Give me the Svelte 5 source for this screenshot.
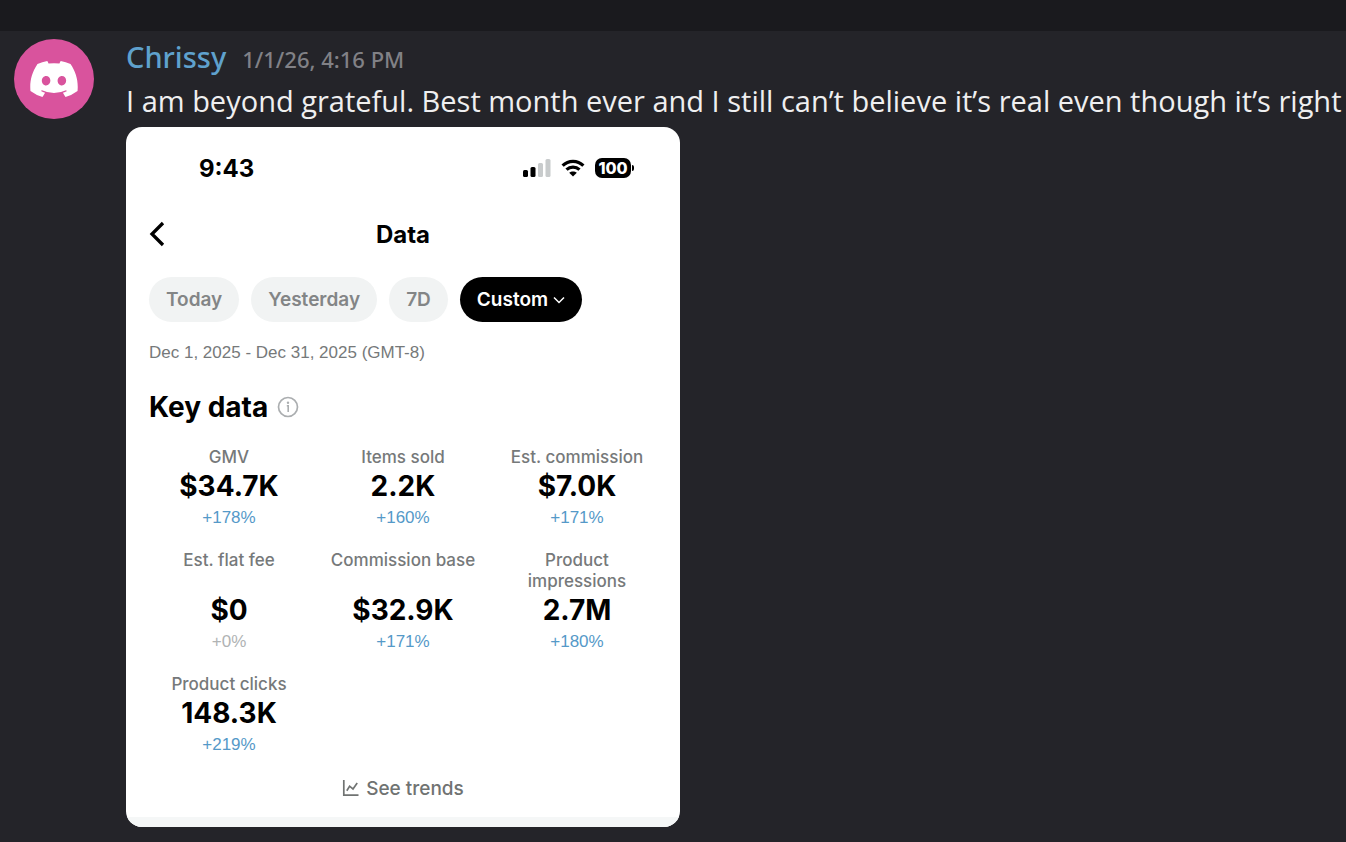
<script>
  const ranges = [
    { label: 'Today' },
    { label: 'Yesterday' },
    { label: '7D' },
    { label: 'Custom', active: true }
  ];

  const metrics = [
    { label: 'GMV', value: '$34.7K', change: '+178%' },
    { label: 'Items sold', value: '2.2K', change: '+160%' },
    { label: 'Est. commission', value: '$7.0K', change: '+171%' },
    { label: 'Est. flat fee', value: '$0', change: '+0%', flat: true },
    { label: 'Commission base', value: '$32.9K', change: '+171%' },
    { label: 'Product impressions', value: '2.7M', change: '+180%' },
    { label: 'Product clicks', value: '148.3K', change: '+219%' }
  ];
</script>

<div class="chat">
  <div class="topbar"></div>
  <article class="message">
    <div class="avatar">
      <svg width="48" height="36" viewBox="0 0 127.14 96.36" aria-hidden="true">
        <path fill="#fff" d="M107.7,8.07A105.15,105.15,0,0,0,81.47,0a72.06,72.06,0,0,0-3.36,6.83A97.68,97.68,0,0,0,49,6.83,72.37,72.37,0,0,0,45.64,0,105.89,105.89,0,0,0,19.39,8.09C2.79,32.65-1.71,56.6.54,80.21h0A105.73,105.73,0,0,0,32.71,96.36,77.7,77.7,0,0,0,39.6,85.25a68.42,68.42,0,0,1-10.85-5.18c.91-.66,1.8-1.34,2.66-2a75.57,75.57,0,0,0,64.32,0c.87.71,1.76,1.39,2.66,2a68.68,68.68,0,0,1-10.87,5.19,77,77,0,0,0,6.89,11.1A105.25,105.25,0,0,0,126.6,80.22h0C129.24,52.84,122.09,29.11,107.7,8.07ZM42.45,65.69C36.18,65.69,31,60,31,53s5-12.74,11.43-12.74S54,46,53.89,53,48.84,65.69,42.45,65.69Zm42.24,0C78.41,65.69,73.25,60,73.25,53s5-12.74,11.44-12.74S96.23,46,96.12,53,91.08,65.69,84.69,65.69Z" />
      </svg>
    </div>
    <div class="body">
      <header class="meta">
        <span class="author">Chrissy</span>
        <time>1/1/26, 4:16 PM</time>
      </header>
      <p class="text">I am beyond grateful. Best month ever and I still can’t believe it’s real even though it’s right</p>

      <section class="card">
        <div class="status">
          <span class="clock">9:43</span>
          <div class="indicators">
            <svg width="28" height="18" viewBox="0 0 28 18" aria-hidden="true">
              <rect x="0" y="11" width="5" height="7" rx="1.5" fill="#000" />
              <rect x="7.5" y="8" width="5" height="10" rx="1.5" fill="#000" />
              <rect x="15" y="4" width="5" height="14" rx="1.5" fill="#c8cbcc" />
              <rect x="22.5" y="0" width="5" height="18" rx="1.5" fill="#c8cbcc" />
            </svg>
            <svg width="24" height="18" viewBox="0 0 24 18" aria-hidden="true">
              <path d="M1.6 6.6C7.5.9 16.500.9 22.400 6.600M5.500 10.600C9.200 7.200 14.800 7.200 18.500 10.600" fill="none" stroke="#000" stroke-width="3.200" />
              <path d="M12 17.600 8.200 13.800C10.300 12 13.700 12 15.800 13.800Z" fill="#000" />
            </svg>
            <div class="battery"><span class="level">100</span><span class="nub"></span></div>
          </div>
        </div>

        <div class="nav">
          <button class="back" aria-label="Back">
            <svg width="16" height="26" viewBox="0 0 16 26" aria-hidden="true">
              <path d="M14 2 3 13 14 24" fill="none" stroke="#000" stroke-width="3.300" />
            </svg>
          </button>
          <h1>Data</h1>
        </div>

        <div class="ranges">
          {#each ranges as range}
            <button class="chip" class:active={range.active}>
              {range.label}
              {#if range.active}
                <svg width="12" height="8" viewBox="0 0 12 8" aria-hidden="true">
                  <path d="M1 1.500 6 6.500 11 1.500" fill="none" stroke="#fff" stroke-width="1.500" />
                </svg>
              {/if}
            </button>
          {/each}
        </div>

        <p class="period">Dec 1, 2025 - Dec 31, 2025 (GMT-8)</p>

        <div class="heading">
          <h2>Key data</h2>
          <svg width="22" height="22" viewBox="0 0 22 22" aria-hidden="true">
            <circle cx="11" cy="11" r="9.500" fill="none" stroke="#abaeb0" stroke-width="1.700" />
            <circle cx="11" cy="6.700" r="1.200" fill="#abaeb0" />
            <path d="M9.800 9.700H11.200V16" fill="none" stroke="#abaeb0" stroke-width="1.600" />
          </svg>
        </div>

        <dl class="metrics">
          {#each metrics as metric}
            <div class="metric">
              <dt>{metric.label}</dt>
              <dd class="value">{metric.value}</dd>
              <dd class="change" class:flat={metric.flat}>{metric.change}</dd>
            </div>
          {/each}
        </dl>

        <button class="trends">
          <svg width="18" height="18" viewBox="0 0 18 18" aria-hidden="true">
            <path d="M1.800 1V16.200H16.500" fill="none" stroke="#707372" stroke-width="1.700" />
            <path d="M4.800 11.800 7.600 7.200 11 10 15.200 4" fill="none" stroke="#707372" stroke-width="1.700" />
          </svg>
          See trends
        </button>
        <div class="strip"></div>
      </section>
    </div>
  </article>
</div>

<style>
  :global(body) {
    background: #242429;
    overflow: hidden;
  }
  .chat {
    font-family: Inter, sans-serif;
  }
  .topbar {
    height: 31px;
    background: #1a1a1e;
  }
  .message {
    display: flex;
    gap: 32px;
    padding: 8px 0 0 14px;
  }
  .avatar {
    flex: none;
    width: 80px;
    height: 80px;
    border-radius: 50%;
    background: #d9539d;
    display: flex;
    align-items: center;
    justify-content: center;
  }
  .body {
    flex: 1;
    min-width: 0;
    font-family: "Open Sans", sans-serif;
  }
  .meta {
    display: flex;
    align-items: baseline;
    gap: 16px;
    height: 38px;
    font-family: "Noto Sans", sans-serif;
    line-height: 36px;
  }
  .author {
    font-size: 29px;
    font-weight: 500;
    color: #5fa1cd;
  }
  time {
    font-size: 22px;
    font-weight: 500;
    color: #818186;
  }
  .text {
    margin: 0;
    padding-bottom: 2px;
    font-size: 29px;
    line-height: 48px;
    color: #efeff0;
    white-space: nowrap;
  }
  .card {
    width: 554px;
    border-radius: 16px;
    overflow: hidden;
    background: #fff;
    color: #000;
    font-family: Inter, sans-serif;
  }
  button {
    border: 0;
    margin: 0;
    padding: 0;
    background: none;
    font-family: inherit;
  }
  .status {
    display: flex;
    justify-content: space-between;
    align-items: center;
    height: 34px;
    padding: 24px 46px 0 73px;
  }
  .clock {
    font-size: 24px;
    font-weight: 700;
  }
  .indicators {
    display: flex;
    align-items: center;
    gap: 10px;
  }
  .battery {
    display: flex;
    align-items: center;
    gap: 1px;
  }
  .level {
    width: 36px;
    border-radius: 7px;
    background: #000;
    color: #fff;
    font-size: 16px;
    font-weight: 800;
    line-height: 20px;
    text-align: center;
  }
  .nub {
    width: 2px;
    height: 6px;
    border-radius: 0 2px 2px 0;
    background: #000;
  }
  .nav {
    display: grid;
    grid-template-columns: 1fr auto 1fr;
    align-items: center;
    height: 32px;
    padding: 33px 23px 0;
  }
  .back {
    display: flex;
  }
  h1 {
    margin: 0;
    font-size: 24px;
    font-weight: 700;
  }
  .ranges {
    display: flex;
    gap: 12px;
    padding: 27px 23px 0;
  }
  .chip {
    display: flex;
    align-items: center;
    gap: 5px;
    height: 45px;
    padding: 0 17px;
    border-radius: 23px;
    background: #f1f3f3;
    color: #838586;
    font-size: 19px;
    font-weight: 600;
  }
  .active {
    background: #000;
    color: #fff;
  }
  .period {
    margin: 0;
    padding: 19px 23px 0;
    font-family: "Liberation Sans", Arial, sans-serif;
    font-size: 17px;
    line-height: 24px;
    color: #76797a;
  }
  .heading {
    display: flex;
    align-items: center;
    gap: 9px;
    padding: 24px 23px 0;
  }
  h2 {
    margin: 0;
    font-size: 28px;
    font-weight: 700;
    line-height: 36px;
  }
  .metrics {
    display: grid;
    grid-template-columns: repeat(3, 1fr);
    row-gap: 19px;
    margin: 0;
    padding: 22px 16px 0;
  }
  .metric {
    display: flex;
    flex-direction: column;
    text-align: center;
  }
  dt {
    flex: 1;
    padding: 0 12px;
    font-size: 17px;
    font-weight: 500;
    line-height: 21px;
    color: #76797a;
  }
  dd {
    margin: 0;
  }
  .value {
    font-size: 28px;
    font-weight: 700;
    line-height: 37px;
  }
  .change {
    font-family: "Liberation Sans", Arial, sans-serif;
    font-size: 17px;
    line-height: 26px;
    color: #5599c8;
  }
  .flat {
    color: #b0b3b4;
  }
  .trends {
    display: flex;
    align-items: center;
    gap: 6px;
    height: 36px;
    margin: 12px auto 11px;
    color: #707372;
    font-size: 19px;
    font-weight: 500;
  }
  .strip {
    height: 10px;
    background: #f5f7f7;
  }
</style>
